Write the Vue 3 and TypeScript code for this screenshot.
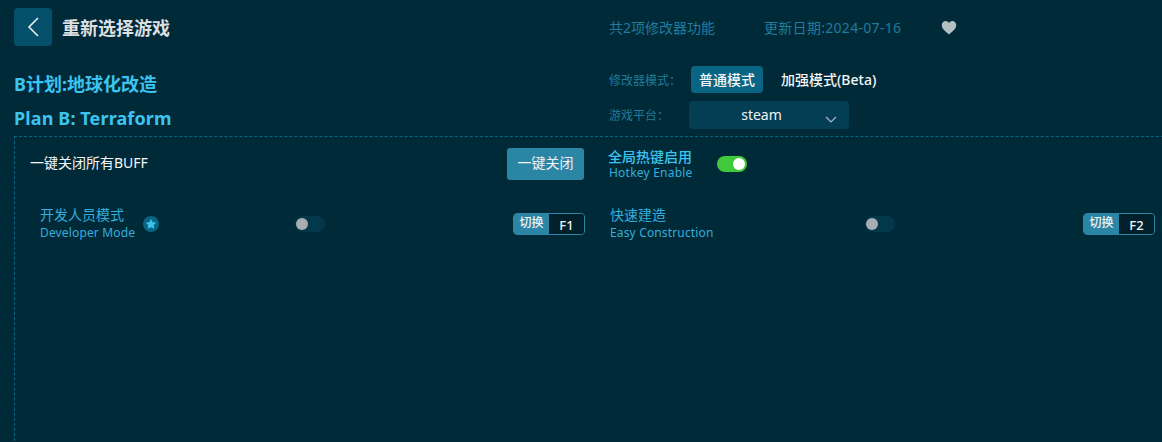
<script setup lang="ts">
import { ref } from 'vue'

interface Cheat {
  name: string
  en: string
  key: string
  star: boolean
  on: boolean
}

const cheats = ref<Array<Cheat>>([
  { name: '开发人员模式', en: 'Developer Mode', key: 'F1', star: true, on: false },
  { name: '快速建造', en: 'Easy Construction', key: 'F2', star: false, on: false }
])
const hotkeyOn = ref(true)
</script>

<template>
  <div class="page">
    <header class="top">
      <div class="top-left">
        <button class="back">
          <svg width="14" height="22" viewBox="0 0 14 22">
            <path d="M12 2 L3 11 L12 20" fill="none" stroke="#e8eef0" stroke-width="1.6" />
          </svg>
        </button>
        <span class="reselect">重新选择游戏</span>
      </div>
      <div class="meta">
        <span class="meta-count">共2项修改器功能</span>
        <span class="meta-date">更新日期:2024-07-16</span>
        <svg class="heart" width="16" height="15" viewBox="0 0 16 15">
          <path d="M8 14.5 C3 10.5 .8 8.3 .8 5 C.8 2.6 2.6 .9 4.6 .9 C6 .9 7.3 1.6 8 3 C8.7 1.6 10 .9 11.4 .9 C13.4 .9 15.2 2.6 15.2 5 C15.2 8.3 13 10.5 8 14.5 Z" fill="#b4bfc4" />
        </svg>
      </div>
    </header>

    <section class="info">
      <div class="titles">
        <h1>B计划:地球化改造</h1>
        <h2>Plan B: Terraform</h2>
      </div>
      <div class="options">
        <div class="opt-row mode-row">
          <span class="opt-label">修改器模式：</span>
          <span class="mode active">普通模式</span>
          <span class="mode">加强模式(Beta)</span>
        </div>
        <div class="opt-row">
          <span class="opt-label">游戏平台：</span>
          <div class="select">
            <span>steam</span>
            <svg class="caret" width="12" height="7" viewBox="0 0 12 7">
              <path d="M1 1 L6 6 L11 1" fill="none" stroke="#a9bcc4" stroke-width="1.2" />
            </svg>
          </div>
        </div>
      </div>
    </section>

    <main class="panel">
      <div class="panel-head">
        <div class="close-all">
          <span class="close-text">一键关闭所有BUFF</span>
          <button class="close-btn">一键关闭</button>
        </div>
        <div class="hotkey-enable">
          <div class="he-text">
            <strong>全局热键启用</strong>
            <span>Hotkey Enable</span>
          </div>
          <span class="switch" :class="{ on: hotkeyOn }"><i></i></span>
        </div>
      </div>
      <div class="cheats">
        <div v-for="c in cheats" :key="c.key" class="cheat">
          <div class="cheat-name">
            <div class="cheat-text">
              <span class="cn">{{ c.name }}</span>
              <span class="en">{{ c.en }}</span>
            </div>
            <span v-if="c.star" class="star">
              <svg width="10" height="10" viewBox="0 0 24 24">
                <path d="M12 1.5 L15.3 8.4 L22.8 9.4 L17.3 14.6 L18.7 22 L12 18.4 L5.3 22 L6.7 14.6 L1.2 9.4 L8.7 8.4 Z" fill="#3cc4f0" stroke="#3cc4f0" stroke-width="2" stroke-linejoin="round" />
              </svg>
            </span>
          </div>
          <span class="switch" :class="{ on: c.on }"><i></i></span>
          <div class="key">
            <span class="key-label">切换</span>
            <span class="key-value">{{ c.key }}</span>
          </div>
        </div>
      </div>
    </main>
  </div>
</template>

<style>
html, body {
  margin: 0;
  background: #012a39;
  overflow: hidden;
}
</style>

<style scoped>
.page {
  width: 1162px;
  height: 442px;
  overflow: hidden;
  background: #012a39;
  font-family: "Noto Sans", "Noto Sans CJK SC", sans-serif;
}
.top {
  display: flex;
  padding: 8px 0 0 14px;
  height: 38px;
}
.top-left {
  display: flex;
  align-items: center;
  width: 595px;
}
.back {
  width: 38px;
  height: 38px;
  padding: 0;
  margin-right: 10px;
  border: 0;
  border-radius: 4px;
  background: #044f69;
  display: flex;
  align-items: center;
  justify-content: center;
}
.reselect {
  font-size: 18px;
  font-weight: 700;
  color: #dcdfe0;
}
.meta {
  display: flex;
  align-items: center;
  font-size: 14px;
  color: #1f7c9b;
}
.meta-count {
  width: 155px;
}
.meta-date {
  width: 177px;
  letter-spacing: .3px;
}
.info {
  display: flex;
  padding: 20px 0 0 14px;
}
.titles {
  width: 595px;
  padding-top: 6px;
}
.titles h1, .titles h2 {
  margin: 0;
  font-weight: 700;
  font-size: 18px;
  color: #3cc4f0;
  line-height: 24px;
}
.titles h2 {
  margin-top: 10px;
  letter-spacing: .12px;
}
.options {
  display: flex;
  flex-direction: column;
  gap: 8px;
}
.opt-row {
  display: flex;
  align-items: center;
  font-size: 12px;
}
.mode-row {
  height: 27px;
}
.opt-label {
  width: 80px;
  color: #1f7c9b;
}
.mode {
  font-size: 14px;
  font-weight: 500;
  color: #f4f7f8;
  padding: 0 8px;
  line-height: 27px;
  border-radius: 4px;
  margin-left: 2px;
  margin-right: 8px;
}
.mode.active {
  background: #0a6584;
}
.select {
  position: relative;
  width: 160px;
  height: 28px;
  border-radius: 4px;
  background: #043e54;
  color: #f0f4f5;
  font-size: 14px;
  line-height: 28px;
  text-align: center;
  box-sizing: border-box;
  padding-right: 15px;
}
.caret {
  position: absolute;
  right: 12px;
  top: 15px;
}
.panel {
  margin: 6px 0 0 14px;
  width: 1200px;
  height: 320px;
  box-sizing: border-box;
  border-top: 1px dashed #0a6584;
  border-left: 1px dashed #0a6584;
  padding-top: 11px;
}
.panel-head {
  display: flex;
  height: 32px;
}
.close-all {
  display: flex;
  align-items: center;
  justify-content: space-between;
  width: 569px;
  padding-left: 15px;
  box-sizing: border-box;
  color: #f4f7f8;
  font-size: 14px;
}
.close-text {
  margin-top: -5px;
}
.close-btn {
  width: 77px;
  height: 32px;
  padding: 0 0 4px;
  border: 0;
  border-radius: 3px;
  background: #2b86a6;
  color: #f0f4f5;
  font: inherit;
}
.hotkey-enable {
  display: flex;
  align-items: center;
  margin-left: 24px;
  gap: 24px;
}
.he-text {
  display: flex;
  flex-direction: column;
  line-height: 16px;
}
.he-text strong {
  font-size: 14px;
  line-height: 17px;
  font-weight: 500;
  color: #3cc4f0;
}
.he-text span {
  font-size: 12px;
  line-height: 16px;
  color: #33aedb;
  letter-spacing: .22px;
  padding-left: 1px;
}
.switch {
  display: inline-block;
  position: relative;
  width: 30px;
  height: 16px;
  border-radius: 8px;
  background: #03384b;
}
.switch i {
  position: absolute;
  left: 1px;
  top: 2px;
  width: 12px;
  height: 12px;
  border-radius: 50%;
  background: #a8adb1;
}
.switch.on {
  background: #41c93c;
}
.switch.on i {
  left: auto;
  right: 2px;
  background: #fff;
}
.cheats {
  display: grid;
  grid-template-columns: 545px 545px;
  column-gap: 25px;
  padding: 25px 0 0 25px;
}
.cheat {
  display: grid;
  grid-template-columns: 255px 1fr auto;
  align-items: center;
  height: 36px;
}
.cheat-name {
  display: flex;
  align-items: center;
  gap: 6px;
}
.cheat-text {
  display: flex;
  flex-direction: column;
  margin-top: 2px;
}
.cn {
  font-size: 14px;
  line-height: 16px;
  color: #33aedb;
}
.en {
  font-size: 12px;
  line-height: 18px;
  margin-top: 1px;
  color: #33aedb;
  letter-spacing: .15px;
}
.star {
  width: 16px;
  height: 16px;
  border-radius: 50%;
  background: #0a6584;
  display: flex;
  align-items: center;
  justify-content: center;
  margin-left: 2px;
}
.key {
  display: flex;
  width: 72px;
  height: 22px;
  box-sizing: border-box;
  border: 1px solid #2b86a6;
  border-radius: 4px;
  overflow: hidden;
  font-size: 12px;
  line-height: 20px;
  color: #f0f4f5;
}
.key-label {
  width: 35px;
  background: #2b86a6;
  text-align: center;
  line-height: 17px;
  font-weight: 500;
}
.key-value {
  flex: 1;
  text-align: center;
  font-size: 13px;
  line-height: 22px;
  font-weight: 500;
  background: #01202c;
}
</style>
